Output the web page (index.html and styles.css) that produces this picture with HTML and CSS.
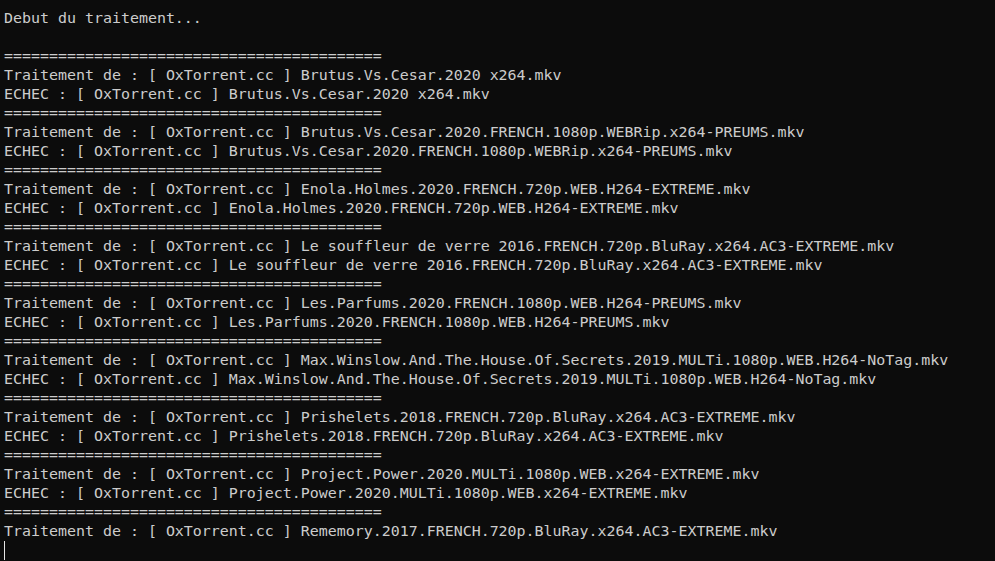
FILE: index.html
```html
<!DOCTYPE html>
<html>
<head>
<meta charset="utf-8">
<link rel="stylesheet" href="styles.css">
</head>
<body>
<pre class="console">Debut du traitement...

==========================================
Traitement de : [ OxTorrent.cc ] Brutus.Vs.Cesar.2020 x264.mkv
ECHEC : [ OxTorrent.cc ] Brutus.Vs.Cesar.2020 x264.mkv
==========================================
Traitement de : [ OxTorrent.cc ] Brutus.Vs.Cesar.2020.FRENCH.1080p.WEBRip.x264-PREUMS.mkv
ECHEC : [ OxTorrent.cc ] Brutus.Vs.Cesar.2020.FRENCH.1080p.WEBRip.x264-PREUMS.mkv
==========================================
Traitement de : [ OxTorrent.cc ] Enola.Holmes.2020.FRENCH.720p.WEB.H264-EXTREME.mkv
ECHEC : [ OxTorrent.cc ] Enola.Holmes.2020.FRENCH.720p.WEB.H264-EXTREME.mkv
==========================================
Traitement de : [ OxTorrent.cc ] Le souffleur de verre 2016.FRENCH.720p.BluRay.x264.AC3-EXTREME.mkv
ECHEC : [ OxTorrent.cc ] Le souffleur de verre 2016.FRENCH.720p.BluRay.x264.AC3-EXTREME.mkv
==========================================
Traitement de : [ OxTorrent.cc ] Les.Parfums.2020.FRENCH.1080p.WEB.H264-PREUMS.mkv
ECHEC : [ OxTorrent.cc ] Les.Parfums.2020.FRENCH.1080p.WEB.H264-PREUMS.mkv
==========================================
Traitement de : [ OxTorrent.cc ] Max.Winslow.And.The.House.Of.Secrets.2019.MULTi.1080p.WEB.H264-NoTag.mkv
ECHEC : [ OxTorrent.cc ] Max.Winslow.And.The.House.Of.Secrets.2019.MULTi.1080p.WEB.H264-NoTag.mkv
==========================================
Traitement de : [ OxTorrent.cc ] Prishelets.2018.FRENCH.720p.BluRay.x264.AC3-EXTREME.mkv
ECHEC : [ OxTorrent.cc ] Prishelets.2018.FRENCH.720p.BluRay.x264.AC3-EXTREME.mkv
==========================================
Traitement de : [ OxTorrent.cc ] Project.Power.2020.MULTi.1080p.WEB.x264-EXTREME.mkv
ECHEC : [ OxTorrent.cc ] Project.Power.2020.MULTi.1080p.WEB.x264-EXTREME.mkv
==========================================
Traitement de : [ OxTorrent.cc ] Rememory.2017.FRENCH.720p.BluRay.x264.AC3-EXTREME.mkv
<span class="cursor"></span></pre>
</body>
</html>
```
FILE: styles.css
```css
html, body {
  margin: 0;
  padding: 0;
  background: #0c0c0c;
  height: 100%;
  overflow: hidden;
}
.console {
  margin: 0;
  padding: 9px 0 0 4px;
  font-family: "DejaVu Sans Mono", "Liberation Mono", monospace;
  font-size: 14.95px;
  line-height: 19px;
  color: #cccccc;
  white-space: pre;
}
.cursor {
  display: inline-block;
  width: 1px;
  height: 19px;
  background: #e6e6e6;
  vertical-align: top;
}
```
